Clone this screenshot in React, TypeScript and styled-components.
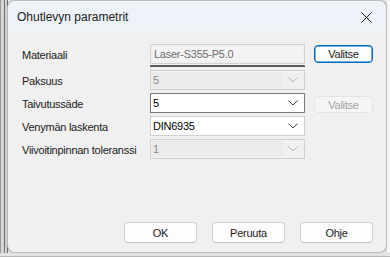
import React from "react";
import styled, { createGlobalStyle } from "styled-components";

const Global = createGlobalStyle`
  html, body { margin: 0; padding: 0; background: #e4e4e4; }
  body { font-family: "Liberation Sans", Arial, sans-serif; }
  * { box-sizing: border-box; }
`;

const Page = styled.div`
  width: 390px;
  height: 257px;
  display: flex;
  flex-direction: column;
  overflow: hidden;
  background: #e6e6e6;
`;

const TopArea = styled.div`
  height: 253px;
  display: flex;
`;

const LeftStrip = styled.div`
  width: 7px;
  background: #d6d6d6;
  border-left: 1px solid #9a9a9a;
  display: flex;
  justify-content: flex-start;
  padding-left: 1px;
`;

const StripLine = styled.div`
  width: 1px;
  background: #6a6a6a;
  margin-left: 2px;
`;

const RightGap = styled.div`
  flex: 1;
  background: #f4f4f4;
`;

const BottomStrip = styled.div`
  flex: 1;
  background: #e2e2e2;
  border-bottom: 1px solid #b9b9b9;
`;

const Dialog = styled.div`
  width: 380px;
  height: 253px;
  display: flex;
  flex-direction: column;
  background: #f0f0f0;
  border: 1px solid #bcbcbc;
  border-radius: 8px;
  overflow: hidden;
  box-shadow: 0 0 2px rgba(0, 0, 0, 0.25);
`;

const TitleBar = styled.div`
  height: 30px;
  flex: none;
  display: flex;
  align-items: center;
  justify-content: space-between;
  background: #eef3f9;
  padding: 0 14px 0 9px;
`;

const Title = styled.span`
  font-size: 12px;
  color: #1b1b1b;
  padding-top: 2px;
`;

const CloseIcon = styled.svg`
  width: 11px;
  height: 11px;
  margin-top: 2px;
`;

const Body = styled.div`
  flex: 1;
  display: flex;
  flex-direction: column;
  padding: 13px 13px 9px 14px;
`;

const Form = styled.div`
  display: grid;
  grid-template-columns: 119px 155px 59px;
  column-gap: 9px;
  row-gap: 3px;
  align-items: start;
`;

const Label = styled.div`
  height: 20px;
  display: flex;
  align-items: center;
  font-size: 11px;
  letter-spacing: -0.25px;
  color: #1a1a1a;
  white-space: nowrap;
  padding-top: 1px;
`;

const TextBoxWrap = styled.div`
  display: flex;
  flex-direction: column;
  gap: 1px;
`;

const TextBox = styled.div`
  height: 20px;
  border: 1px solid #d2d2d2;
  background: #f0f0f0;
  padding: 2px;
  display: flex;
`;

const TextInner = styled.div`
  flex: 1;
  background: #f3f3f3;
  display: flex;
  align-items: center;
  padding-left: 1px;
  font-size: 11px;
  letter-spacing: -0.25px;
  color: #6d6d6d;
`;

const Underline = styled.div`
  height: 2px;
  background: #5b5b5b;
  border-radius: 1px 1px 0 0;
`;

const Combo = styled.div<{ $state: "disabled" | "focus" | "normal" }>`
  height: 20px;
  display: flex;
  align-items: stretch;
  border: 1px solid
    ${(p) => (p.$state === "focus" ? "#7a7a7a" : p.$state === "disabled" ? "#d0d0d0" : "#cfcfcf")};
  background: ${(p) => (p.$state === "disabled" ? "#f0f0f0" : "#ffffff")};
  padding: 1px;
`;

const ComboText = styled.div<{ $disabled?: boolean }>`
  flex: 1;
  display: flex;
  align-items: center;
  padding-left: 1px;
  font-size: 11px;
  letter-spacing: -0.25px;
  color: ${(p) => (p.$disabled ? "#8a8a8a" : "#000000")};
  background: ${(p) => (p.$disabled ? "#ebebeb" : "transparent")};
`;

const Arrow = styled.div`
  width: 20px;
  display: flex;
  align-items: center;
  justify-content: center;
`;

const SmallButton = styled.button<{ $variant: "default" | "disabled" }>`
  height: ${(p) => (p.$variant === "default" ? 18 : 17)}px;
  margin-top: ${(p) => (p.$variant === "default" ? 1 : 3)}px;
  border-radius: 4px;
  font-family: "Liberation Sans", Arial, sans-serif;
  font-size: 11px;
  letter-spacing: -0.25px;
  padding: 0;
  border: 1px solid ${(p) => (p.$variant === "default" ? "#0067c0" : "#e3e3e3")};
  background: ${(p) => (p.$variant === "default" ? "#fdfdfd" : "#f5f5f5")};
  color: ${(p) => (p.$variant === "default" ? "#1a1a1a" : "#a2a2a2")};
  box-shadow: ${(p) => (p.$variant === "default" ? "inset 0 0 0 0.5px #0067c0" : "none")};
`;

const Spacer = styled.div`
  flex: 1;
`;

const ButtonRow = styled.div`
  display: flex;
  justify-content: flex-end;
  gap: 15px;
`;

const DialogButton = styled.button`
  width: 73px;
  height: 21px;
  border: 1px solid #d0d0d0;
  border-bottom-color: #c2c2c2;
  border-radius: 4px;
  background: #fdfdfd;
  font-family: "Liberation Sans", Arial, sans-serif;
  font-size: 11px;
  letter-spacing: -0.25px;
  color: #1a1a1a;
  padding: 0;
`;

const Chevron = ({ disabled }: { disabled?: boolean }) => (
  <svg width="10" height="6" viewBox="0 0 10 6">
    <polyline
      points="0.5,0.5 5,5 9.5,0.5"
      fill="none"
      stroke={disabled ? "#b4b4b4" : "#404040"}
      strokeWidth="1"
    />
  </svg>
);

type ComboProps = { value: string; state: "disabled" | "focus" | "normal" };

const ComboBox = ({ value, state }: ComboProps) => (
  <Combo $state={state}>
    <ComboText $disabled={state === "disabled"}>{value}</ComboText>
    <Arrow>
      <Chevron disabled={state === "disabled"} />
    </Arrow>
  </Combo>
);

export default function App() {
  return (
    <>
      <Global />
      <Page>
        <TopArea>
          <LeftStrip>
            <StripLine />
            <StripLine />
          </LeftStrip>
          <Dialog>
            <TitleBar>
              <Title>Ohutlevyn parametrit</Title>
              <CloseIcon viewBox="0 0 11 11">
                <path d="M0.5 0.5 L10.5 10.5 M10.5 0.5 L0.5 10.5" stroke="#1b1b1b" strokeWidth="1" />
              </CloseIcon>
            </TitleBar>
            <Body>
              <Form>
                <Label>Materiaali</Label>
                <TextBoxWrap>
                  <TextBox>
                    <TextInner>Laser-S355-P5.0</TextInner>
                  </TextBox>
                  <Underline />
                </TextBoxWrap>
                <SmallButton $variant="default">Valitse</SmallButton>

                <Label>Paksuus</Label>
                <ComboBox value="5" state="disabled" />
                <div />

                <Label>Taivutussäde</Label>
                <ComboBox value="5" state="focus" />
                <SmallButton $variant="disabled">Valitse</SmallButton>

                <Label>Venymän laskenta</Label>
                <ComboBox value="DIN6935" state="normal" />
                <div />

                <Label>Viivoitinpinnan toleranssi</Label>
                <ComboBox value="1" state="disabled" />
                <div />
              </Form>
              <Spacer />
              <ButtonRow>
                <DialogButton>OK</DialogButton>
                <DialogButton>Peruuta</DialogButton>
                <DialogButton>Ohje</DialogButton>
              </ButtonRow>
            </Body>
          </Dialog>
          <RightGap />
        </TopArea>
        <BottomStrip />
      </Page>
    </>
  );
}
